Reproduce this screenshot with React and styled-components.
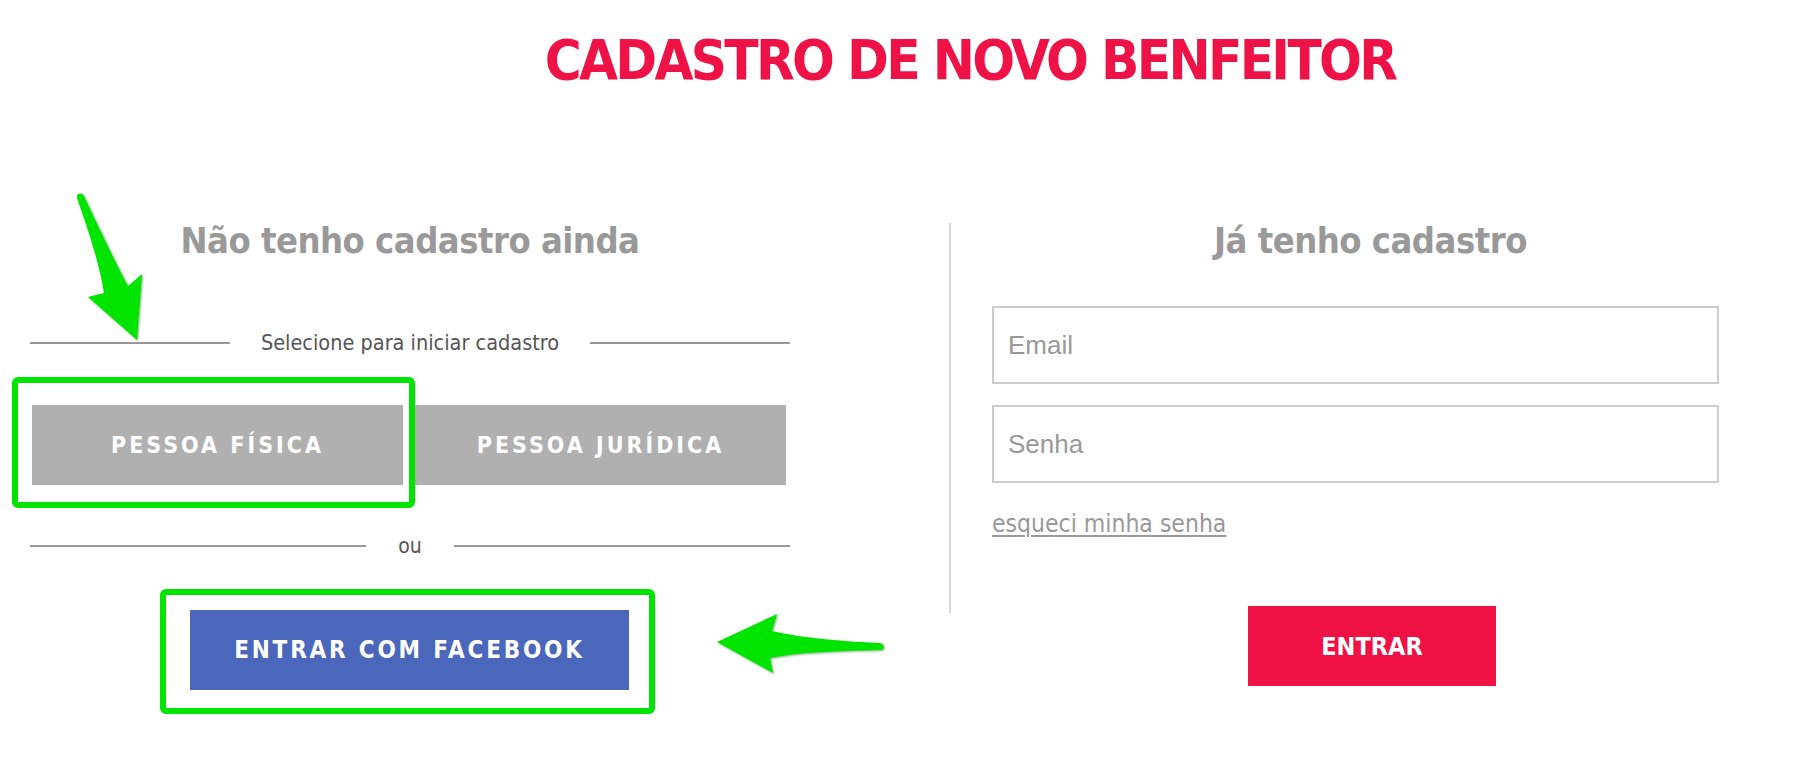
import React from 'react';
import styled, { createGlobalStyle } from 'styled-components';

const GlobalStyle = createGlobalStyle`
  body {
    margin: 0;
    background: #ffffff;
    font-family: "DejaVu Sans Condensed", "DejaVu Sans", sans-serif;
  }
`;

const Page = styled.div`
  position: relative;
  width: 1814px;
  height: 758px;
  overflow: hidden;
`;

const Title = styled.h1`
  margin: 0;
  padding: 28px 0 0 126px;
  text-align: center;
  font-size: 56px;
  font-weight: 700;
  letter-spacing: -2.7px;
  line-height: 64px;
  color: #ee1246;
`;

const Main = styled.main`
  display: flex;
  align-items: flex-start;
  margin-top: 125px;
`;

const LeftColumn = styled.section`
  width: 760px;
  margin-left: 30px;
  display: flex;
  flex-direction: column;
`;

const Heading = styled.h2`
  margin: 0;
  padding-left: ${({ $shift }) => $shift || 0}px;
  text-align: center;
  font-size: 36px;
  font-weight: 700;
  letter-spacing: -0.5px;
  line-height: 48px;
  color: #999999;
`;

const Separator = styled.div`
  display: flex;
  align-items: center;
  margin-top: ${({ $top }) => $top}px;
  font-size: ${({ $size }) => $size}px;
  color: #555555;

  &::before,
  &::after {
    content: '';
    flex: 1;
    height: 2px;
    background: #999999;
  }

  span {
    padding: 0 ${({ $gap }) => $gap}px;
    line-height: 24px;
  }
`;

const ButtonRow = styled.div`
  display: flex;
  gap: 12px;
  margin-top: 50px;
  margin-left: 2px;
  margin-right: 4px;
`;

const TypeButton = styled.button`
  flex: 1;
  height: 80px;
  border: none;
  background: #b0b0b0;
  color: #ffffff;
  font-family: inherit;
  font-size: 23px;
  font-weight: 700;
  letter-spacing: 3px;
  cursor: pointer;
`;

const FacebookButton = styled.button`
  align-self: flex-start;
  width: 439px;
  height: 80px;
  margin: 52px 0 0 160px;
  border: none;
  background: #4a67bb;
  color: #ffffff;
  font-family: inherit;
  font-size: 24px;
  font-weight: 700;
  letter-spacing: 2.8px;
  cursor: pointer;
`;

const Divider = styled.div`
  width: 2px;
  height: 390px;
  margin: 6px 0 0 159px;
  background: #d8d8d8;
`;

const RightColumn = styled.section`
  width: 727px;
  margin-left: 41px;
  display: flex;
  flex-direction: column;
`;

const Input = styled.input`
  box-sizing: border-box;
  width: 100%;
  height: 78px;
  margin-top: ${({ $top }) => $top}px;
  padding: 0 14px;
  border: 2px solid #cccccc;
  font-family: "Liberation Sans", Arial, sans-serif;
  font-size: 26px;
  color: #333333;
  outline: none;

  &::placeholder {
    color: #999999;
  }
`;

const ForgotLink = styled.a`
  align-self: flex-start;
  margin-top: 27px;
  font-size: 24.5px;
  line-height: 28px;
  color: #999999;
  text-decoration: underline;
  text-underline-offset: 3px;
  cursor: pointer;
`;

const SubmitButton = styled.button`
  align-self: flex-start;
  width: 248px;
  height: 80px;
  margin: 68px 0 0 256px;
  border: none;
  background: #ef1144;
  color: #ffffff;
  font-family: inherit;
  font-size: 25px;
  font-weight: 700;
  cursor: pointer;
`;

const Annotations = styled.svg`
  position: absolute;
  top: 0;
  left: 0;
  pointer-events: none;
`;

const Mark = () => (
  <Annotations width="1814" height="758" viewBox="0 0 1814 758">
    <defs>
      <filter id="shade" x="-10%" y="-10%" width="120%" height="120%">
        <feDropShadow dx="1" dy="1" stdDeviation="0.8" floodColor="#006000" floodOpacity="0.5" />
      </filter>
    </defs>
    <rect x="15" y="380" width="397" height="125" rx="3" fill="none" stroke="#00e400" strokeWidth="6" />
    <rect x="163" y="592" width="489" height="119" rx="3" fill="none" stroke="#00e400" strokeWidth="6" />
    <path
      filter="url(#shade)"
      fill="#00e400"
      d="M77,198 C76,193 82,192 84,196 C100,230 115,262 128,286 L142,274 L137,340 L88,297 L104,293 C100,268 92,240 77,198 Z"
    />
    <path
      filter="url(#shade)"
      fill="#00e400"
      d="M717,642 L777,614 L772,631 C800,638 850,642 880,643 C885,644 885,650 880,650 C840,651 800,652 770,658 L773,673 Z"
    />
  </Annotations>
);

const App = () => {
  return (
    <Page>
      <GlobalStyle />
      <Title>CADASTRO DE NOVO BENFEITOR</Title>
      <Main>
        <LeftColumn>
          <Heading>Não tenho cadastro ainda</Heading>
          <Separator $top={66} $gap={31} $size={21.5}>
            <span>Selecione para iniciar cadastro</span>
          </Separator>
          <ButtonRow>
            <TypeButton>PESSOA FÍSICA</TypeButton>
            <TypeButton>PESSOA JURÍDICA</TypeButton>
          </ButtonRow>
          <Separator $top={49} $gap={32} $size={21}>
            <span>ou</span>
          </Separator>
          <FacebookButton>ENTRAR COM FACEBOOK</FacebookButton>
        </LeftColumn>
        <Divider />
        <RightColumn>
          <Heading $shift={30}>Já tenho cadastro</Heading>
          <Input $top={41} type="email" placeholder="Email" />
          <Input $top={21} type="password" placeholder="Senha" />
          <ForgotLink>esqueci minha senha</ForgotLink>
          <SubmitButton>ENTRAR</SubmitButton>
        </RightColumn>
      </Main>
      <Mark />
    </Page>
  );
};

export default App;
